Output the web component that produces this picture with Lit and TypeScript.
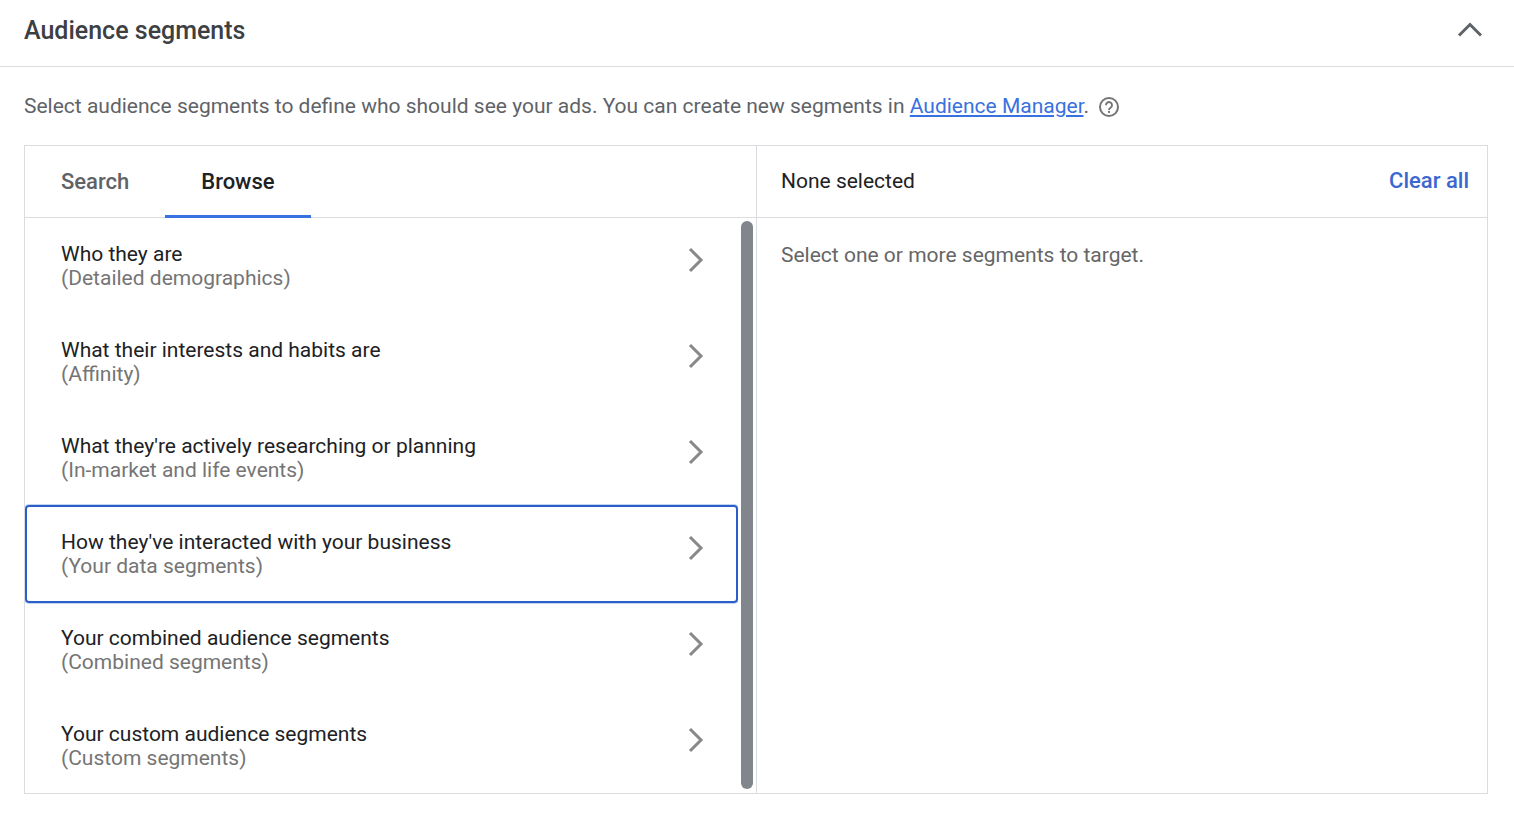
import { LitElement, html, css } from "lit";
import { customElement, state } from "lit/decorators.js";

interface Category {
  title: string;
  detail: string;
}

const CATEGORIES: Category[] = [
  { title: "Who they are", detail: "(Detailed demographics)" },
  { title: "What their interests and habits are", detail: "(Affinity)" },
  { title: "What they're actively researching or planning", detail: "(In-market and life events)" },
  { title: "How they've interacted with your business", detail: "(Your data segments)" },
  { title: "Your combined audience segments", detail: "(Combined segments)" },
  { title: "Your custom audience segments", detail: "(Custom segments)" },
];

@customElement("app-root")
export class AppRoot extends LitElement {
  @state() private active = 3;
  @state() private tab = "Browse";

  static styles = css`
    :host {
      display: block;
      min-height: 100vh;
      background: #fff;
      color: #202124;
      font-family: Roboto, "Liberation Sans", sans-serif;
      font-size: 21px;
      line-height: 24px;
    }
    * {
      box-sizing: border-box;
    }
    button {
      margin: 0;
      padding: 0;
      border: 0;
      background: none;
      font: inherit;
      color: inherit;
      cursor: pointer;
    }
    svg {
      display: block;
      fill: none;
    }
    .header {
      display: flex;
      align-items: center;
      justify-content: space-between;
      padding: 12px 26px 16px 24px;
      border-bottom: 1px solid #dadce0;
    }
    .title {
      margin: 0;
      font-size: 25px;
      line-height: 38px;
      font-weight: 500;
      color: #3c4043;
    }
    .intro {
      display: flex;
      align-items: center;
      gap: 8px;
      padding: 27px 24px;
      color: #5f6368;
    }
    .intro p {
      margin: 0;
    }
    .link {
      color: #3871e0;
      text-decoration: underline;
      text-decoration-thickness: 2px;
      text-underline-offset: 2px;
    }
    .picker {
      display: grid;
      grid-template-columns: 1fr 1fr;
      margin: 0 26px 24px 24px;
      border: 1px solid #dadce0;
    }
    .selection {
      border-left: 1px solid #dadce0;
    }
    .bar {
      display: flex;
      height: 72px;
      border-bottom: 1px solid #dadce0;
    }
    .tab {
      height: 72px;
      padding: 3px 36px 0;
      border-bottom: 3px solid transparent;
      font-size: 22px;
      font-weight: 500;
      color: #5f6368;
    }
    .tab.on {
      border-bottom-color: #3871e0;
      color: #202124;
    }
    .scroller {
      display: flex;
      gap: 3px;
      padding-right: 3px;
    }
    .list {
      flex: 1;
      margin: 0 0 -1px;
      padding: 0;
      list-style: none;
    }
    .row {
      display: flex;
      align-items: flex-start;
      justify-content: space-between;
      width: 100%;
      height: 96px;
      padding: 24px 34px 24px 36px;
      border-radius: 4px;
      text-align: left;
      outline: none;
    }
    .row.on {
      height: 98px;
      margin: -1px 0;
      padding-top: 25px;
      box-shadow: inset 0 0 0 2px #2a5fc9, 0 0 0 1px #c3d3f3;
      clip-path: inset(-1px 0);
    }
    .name,
    .detail {
      display: block;
    }
    .detail {
      color: #757575;
    }
    .thumb {
      width: 12px;
      margin: 3px 0 4px;
      border-radius: 6px;
      background: #80868b;
    }
    .summary {
      align-items: center;
      justify-content: space-between;
      padding: 0 18px 2px 24px;
    }
    .clear {
      font-size: 22px;
      font-weight: 500;
      color: #3c66d0;
    }
    .empty {
      margin: 0;
      padding: 25px 24px;
      color: #666;
    }
  `;

  render() {
    return html`
      <header class="header">
        <h2 class="title">Audience segments</h2>
        <button aria-label="Collapse">
          <svg width="36" height="36" viewBox="0 0 36 36">
            <path d="M7 22.5L18 11.5L29 22.5" stroke="#5f6368" stroke-width="3" />
          </svg>
        </button>
      </header>
      <div class="intro">
        <p>
          Select audience segments to define who should see your ads. You can create new segments in
          <a class="link" href="#">Audience Manager</a>.
        </p>
        <button aria-label="Help">
          <svg width="24" height="24" viewBox="0 0 24 24">
            <circle cx="12" cy="13" r="9" stroke="#757575" stroke-width="2" />
            <path d="M9 11.2a3 3 0 1 1 4.8 2.3c-1.1.8-1.8 1.2-1.8 2.4" stroke="#757575" stroke-width="1.9" />
            <circle cx="12" cy="18" r="1.15" fill="#757575" />
          </svg>
        </button>
      </div>
      <section class="picker">
        <div>
          <div class="bar" role="tablist">
            ${["Search", "Browse"].map(
              (name) => html`<button
                class="tab ${name === this.tab ? "on" : ""}"
                role="tab"
                aria-selected=${name === this.tab}
                @click=${() => (this.tab = name)}
              >${name}</button>`
            )}
          </div>
          <div class="scroller">
            <ul class="list">
              ${CATEGORIES.map(
                (c, i) => html`<li>
                  <button class="row ${i === this.active ? "on" : ""}" @click=${() => (this.active = i)}>
                    <span>
                      <span class="name">${c.title}</span>
                      <span class="detail">${c.detail}</span>
                    </span>
                    <svg width="16" height="36" viewBox="0 0 16 36">
                      <path d="M2 7L13 18L2 29" stroke="#888" stroke-width="3" />
                    </svg>
                  </button>
                </li>`
              )}
            </ul>
            <div class="thumb"></div>
          </div>
        </div>
        <div class="selection">
          <div class="bar summary">
            <span>None selected</span>
            <button class="clear">Clear all</button>
          </div>
          <p class="empty">Select one or more segments to target.</p>
        </div>
      </section>
    `;
  }
}
